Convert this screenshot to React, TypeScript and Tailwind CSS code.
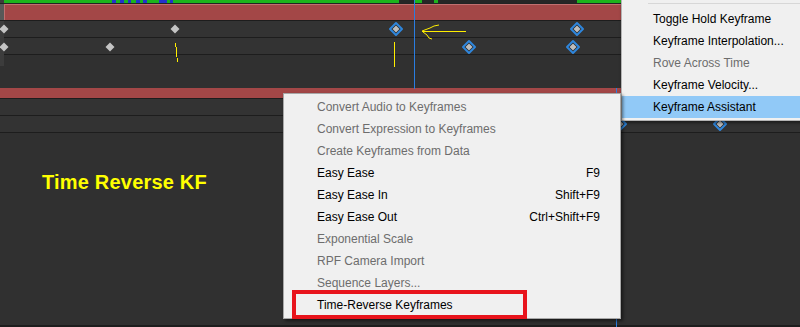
import React from 'react';

const stripSegments: [number, string][] = [
    [4, '#3c3c3c'], [108, '#1cb41c'], [4, '#2233cc'], [4, '#1cb41c'], [4, '#2233cc'], [4, '#1cb41c'],
    [3, '#2233cc'], [5, '#1cb41c'], [4, '#2233cc'], [3, '#1cb41c'], [4, '#2233cc'], [12, '#1cb41c'],
    [8, '#2233cc'], [3, '#1cb41c'], [3, '#2233cc'], [226, '#1cb41c'], [16, '#262626'], [7, '#1cb41c'],
    [12, '#262626'], [4, '#1cb41c'], [139, '#262626'], [223, '#1cb41c'],
];

const grayKeys = [[4, 29], [175, 29], [4, 47], [110, 47]];
const blueKeys = [[396, 29], [577, 29], [469, 47], [573, 47], [720, 124], [620, 124]];

const topMenu = [
    { label: 'Toggle Hold Keyframe' },
    { label: 'Keyframe Interpolation...' },
    { label: 'Rove Across Time', disabled: true },
    { label: 'Keyframe Velocity...' },
    { label: 'Keyframe Assistant', active: true },
];

const keyMenu = [
    { label: 'Convert Audio to Keyframes', disabled: true },
    { label: 'Convert Expression to Keyframes', disabled: true },
    { label: 'Create Keyframes from Data', disabled: true },
    { label: 'Easy Ease', shortcut: 'F9' },
    { label: 'Easy Ease In', shortcut: 'Shift+F9' },
    { label: 'Easy Ease Out', shortcut: 'Ctrl+Shift+F9' },
    { label: 'Exponential Scale', disabled: true },
    { label: 'RPF Camera Import', disabled: true },
    { label: 'Sequence Layers...', disabled: true },
    { label: 'Time-Reverse Keyframes' },
];

const Sep = () => <div className="h-px bg-[#1d1d1d]" />;

const Row = () => <div className="h-[16px] bg-[#333333]" />;

export default function App() {
    return (
        <div className="relative w-[800px] h-[327px] overflow-hidden bg-[#303030] font-['Liberation_Sans',Arial,sans-serif]">
            {/* timeline bars */}
            <div className="flex flex-col h-full">
                <div className="flex h-[3px]">
                    {stripSegments.map(([w, c], i) => (
                        <div key={i} className="h-full shrink-0" style={{ width: w, background: c }} />
                    ))}
                </div>
                <div className="h-px bg-[#232323]" />
                <div className="flex h-[16px]">
                    <div className="w-[4px] bg-[#585858]" />
                    <div className="flex-1 bg-[#a34747] border-t border-l border-[#c07070]" />
                </div>
                <Sep />
                <Row />
                <Sep />
                <Row />
                <Sep />
                <div className="h-[33px]" />
                <div className="h-[10px] bg-[#a34747]" />
                <Sep />
                <Row />
                <Sep />
                <Row />
                <Sep />
                <div className="flex-1" />
                <div className="h-[2px] bg-[#1d1d1d]" />
            </div>

            <div className="absolute left-0 top-[21px] w-[4px] h-[45px] bg-[#3c3c3c]" />

            {/* keyframes, playhead and pen marks */}
            <svg className="absolute inset-0 pointer-events-none" width="800" height="327">
                <line x1="414.5" y1="0" x2="414.5" y2="89" stroke="#2a7de1" strokeWidth="1" />
                <line x1="616.5" y1="88" x2="616.5" y2="327" stroke="#2a7de1" strokeWidth="1" />
                {grayKeys.map(([x, y], i) => (
                    <path key={i} d={`M${x} ${y - 4.5} L${x + 4.5} ${y} L${x} ${y + 4.5} L${x - 4.5} ${y}Z`} fill="#c4c4c4" />
                ))}
                {blueKeys.map(([x, y], i) => (
                    <g key={i}>
                        <path d={`M${x} ${y - 6} L${x + 6} ${y} L${x} ${y + 6} L${x - 6} ${y}Z`} fill="#2a2a2a" stroke="#2f86dc" strokeWidth="2" strokeLinejoin="round" />
                        <path d={`M${x} ${y - 3.5} L${x + 3.5} ${y} L${x} ${y + 3.5} L${x - 3.5} ${y}Z`} fill="#bdbdbd" />
                    </g>
                ))}
                <g stroke="#ffee00" strokeWidth="1" fill="none">
                    <line x1="175.5" y1="43" x2="175.5" y2="47" />
                    <line x1="176.5" y1="47" x2="176.5" y2="57" />
                    <line x1="177.5" y1="58" x2="177.5" y2="62" />
                    <line x1="394.5" y1="42" x2="394.5" y2="67" />
                    <line x1="422" y1="31.5" x2="466" y2="31.5" />
                    <path d="M422 31 L430 28 L434 26 L439 25" />
                    <path d="M423 32 L427 35 L429 38 L432 39" />
                </g>
            </svg>

            <div className="absolute left-[42px] top-[170px] text-[20px] font-bold text-[#ffff00] leading-[24px] tracking-[0.2px]">
                Time Reverse KF
            </div>

            {/* layer submenu */}
            <div className="absolute left-[621px] top-0 w-[185px] h-[121px] bg-[#f0f0f0] border-l border-b border-[#b4b4b4] shadow-[1px_2px_3px_rgba(0,0,0,0.45)] text-[12px]">
                <div className="ml-[26px] mt-[3px] h-px bg-[#d7d7d7]" />
                <div className="mt-[4px]">
                    {topMenu.map(item => (
                        <div
                            key={item.label}
                            className={`h-[22px] flex items-center pl-[31px] ${item.active ? 'bg-[#91c9f7]' : ''} ${item.disabled ? 'text-[#6d6d6d]' : 'text-black'}`}
                        >
                            {item.label}
                        </div>
                    ))}
                </div>
            </div>

            {/* keyframe assistant menu */}
            <div className="absolute left-[283px] top-[93px] w-[338px] h-[226px] bg-[#f0f0f0] border border-[#a8a8a8] shadow-[2px_2px_3px_rgba(0,0,0,0.5)] text-[12px] pt-[2px]">
                {keyMenu.map(item => (
                    <div
                        key={item.label}
                        className={`h-[22px] flex items-center justify-between pl-[33px] pr-[20px] ${item.disabled ? 'text-[#6d6d6d]' : 'text-black'}`}
                    >
                        <span>{item.label}</span>
                        {item.shortcut && <span>{item.shortcut}</span>}
                    </div>
                ))}
                <div className="absolute left-[8px] top-[196px] w-[235px] h-[29px] border-4 border-[#e8141c]" />
            </div>
        </div>
    );
}
